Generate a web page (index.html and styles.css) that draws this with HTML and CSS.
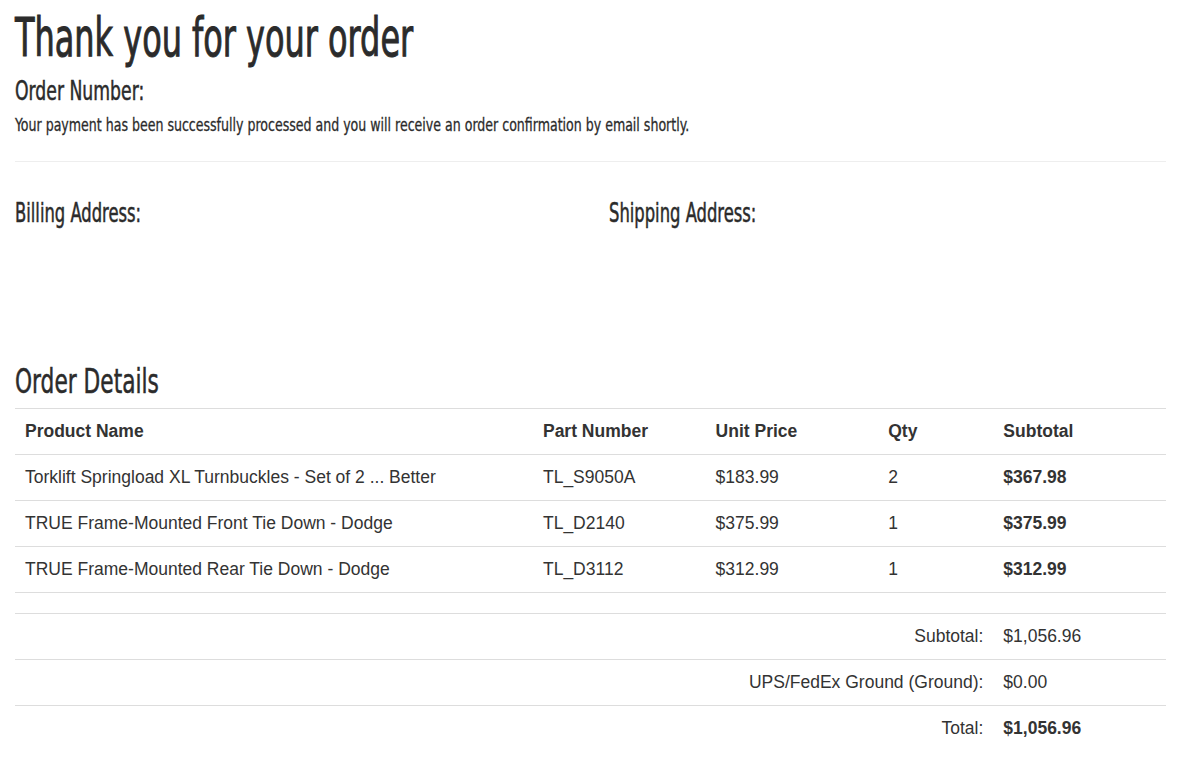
FILE: index.html
```html
<!DOCTYPE html>
<html lang="en">
<head>
	<meta charset="UTF-8">
	<title>Order Confirmation</title>
	<link rel="stylesheet" href="styles.css">
</head>
<body>
<div class="container">
	<h1 class="page-title">Thank you for your order</h1>
	<h3 class="order-number">Order Number:</h3>
	<p class="lead-note">Your payment has been successfully processed and you will receive an order confirmation by email shortly.</p>
	<hr>
	<div class="addresses">
		<div class="address">
			<h3>Billing Address:</h3>
		</div>
		<div class="address shipping">
			<h3>Shipping Address:</h3>
		</div>
	</div>

	<h2 class="section-title">Order Details</h2>
	<table class="items">
		<colgroup>
			<col class="c-name">
			<col class="c-part">
			<col class="c-price">
			<col class="c-qty">
			<col class="c-sub">
		</colgroup>
		<thead>
			<tr>
				<th>Product Name</th>
				<th>Part Number</th>
				<th>Unit Price</th>
				<th>Qty</th>
				<th>Subtotal</th>
			</tr>
		</thead>
		<tbody>
			<tr>
				<td>Torklift Springload XL Turnbuckles - Set of 2 ... Better</td>
				<td>TL_S9050A</td>
				<td>$183.99</td>
				<td>2</td>
				<td><b>$367.98</b></td>
			</tr>
			<tr>
				<td>TRUE Frame-Mounted Front Tie Down - Dodge</td>
				<td>TL_D2140</td>
				<td>$375.99</td>
				<td>1</td>
				<td><b>$375.99</b></td>
			</tr>
			<tr>
				<td>TRUE Frame-Mounted Rear Tie Down - Dodge</td>
				<td>TL_D3112</td>
				<td>$312.99</td>
				<td>1</td>
				<td><b>$312.99</b></td>
			</tr>
		</tbody>
	</table>

	<table class="totals">
		<colgroup>
			<col class="c-label">
			<col class="c-sub">
		</colgroup>
		<tr>
			<td class="label">Subtotal:</td>
			<td>$1,056.96</td>
		</tr>
		<tr>
			<td class="label">UPS/FedEx Ground (Ground):</td>
			<td>$0.00</td>
		</tr>
		<tr>
			<td class="label">Total:</td>
			<td><b>$1,056.96</b></td>
		</tr>
	</table>
</div>
</body>
</html>
```

FILE: styles.css
```css
body{
	margin:0;
	padding:0;
	background:#fff;
	color:#333;
	font-family:"Liberation Sans", Arial, sans-serif;
	font-size:17.5px;
}
.container{
	padding:0 16px 0 15px;
}
/* 标题用窄体字，横向压缩模拟 Oswald */
h1, h2, h3, .lead-note{
	font-family:"DejaVu Sans Condensed", "DejaVu Sans", sans-serif;
	font-weight:normal;
	color:#2b2b2b;
	margin:0;
	transform-origin:left center;
	-webkit-text-stroke:0.5px currentColor;
}
.page-title{
	font-size:53px;
	line-height:60px;
	padding-top:8px;
	transform:scaleX(0.67);
	-webkit-text-stroke:1px currentColor;
}
.order-number{
	font-size:27px;
	line-height:32px;
	margin-top:7px;
	transform:scaleX(0.71);
}
.lead-note{
	font-size:18.5px;
	line-height:22px;
	margin-top:7px;
	transform:scaleX(0.756);
	-webkit-text-stroke:0.3px currentColor;
}
hr{
	border:0;
	border-top:1px solid #eee;
	margin:25px 0 0;
}
.addresses{
	display:grid;
	grid-template-columns:1fr 1fr;
	gap:30px;
	height:199px;
	padding-top:36px;
	box-sizing:border-box;
}
.address h3{
	font-size:26px;
	line-height:30px;
	transform:scaleX(0.7);
}
.shipping{
	padding-left:3px;
}
.section-title{
	font-size:34px;
	line-height:40px;
	transform:scaleX(0.71);
}
table{
	width:100%;
	border-collapse:collapse;
	table-layout:fixed;
}
th, td{
	padding:11px 10px;
	line-height:23px;
	text-align:left;
	border-top:1px solid #ddd;
	vertical-align:top;
}
th{
	font-weight:bold;
}
.items{
	margin-top:7px;
	border-bottom:1px solid #ddd;
}
.c-name{ width:45%; }
.c-part{ width:15%; }
.c-price{ width:15%; }
.c-qty{ width:10%; }
.c-sub{ width:15%; }
.c-label{ width:85%; }
.totals{
	margin-top:20px;
}
.totals .label{
	text-align:right;
}
```
